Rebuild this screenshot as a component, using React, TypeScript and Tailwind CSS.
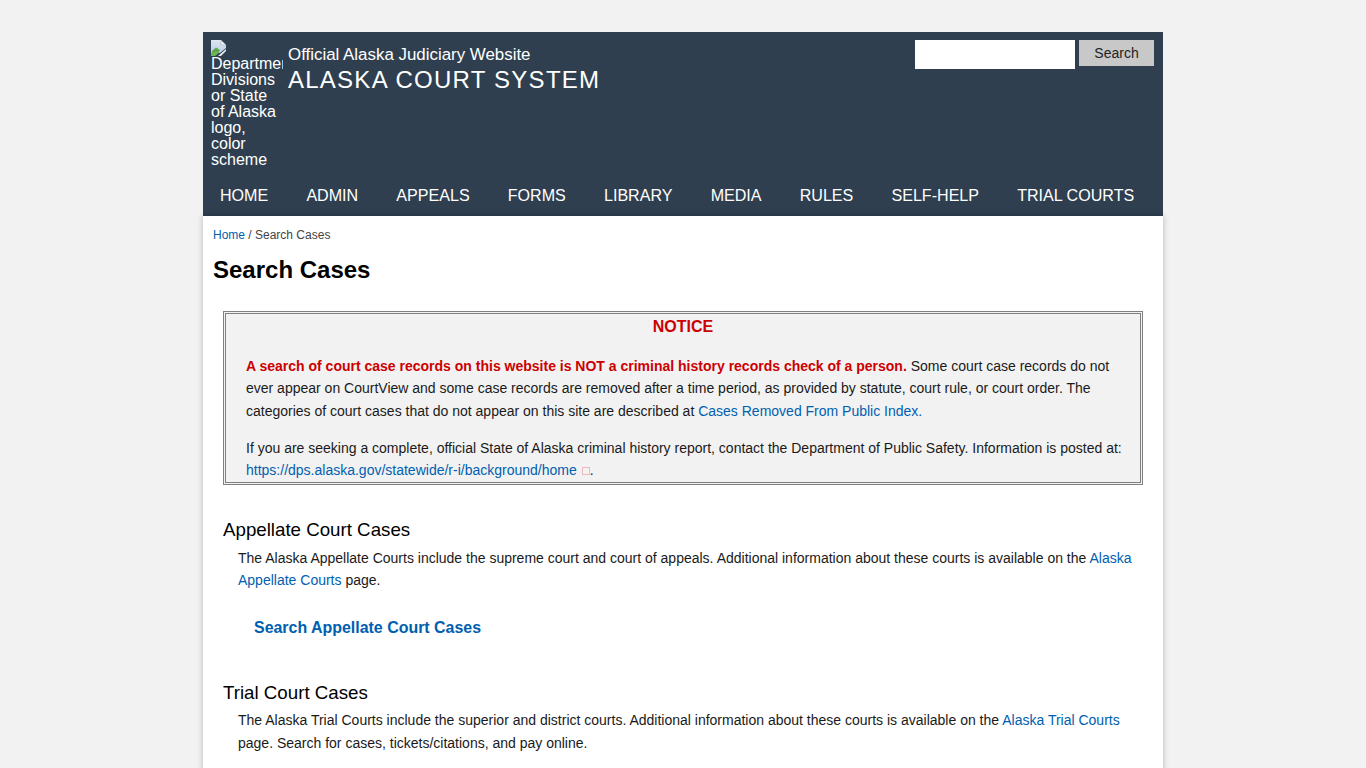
const navItems = ['HOME', 'ADMIN', 'APPEALS', 'FORMS', 'LIBRARY', 'MEDIA', 'RULES', 'SELF-HELP', 'TRIAL COURTS']

const linkClass = 'text-[#0060b0]'

const BrokenImage = () => (
    <svg width="16" height="16" viewBox="0 0 16 16" className="block">
        <defs>
            <linearGradient id="sky" x1="0" y1="0" x2="0" y2="1">
                <stop offset="0" stopColor="#dfe6ee" />
                <stop offset="1" stopColor="#b9cde8" />
            </linearGradient>
        </defs>
        <path d="M0 0H10L15 5V8L9 13H0Z" fill="url(#sky)" />
        <path d="M10 0.5V5H15Z" fill="#f4f5f7" stroke="#9aa3ad" strokeWidth="0.5" />
        <path d="M1 15V11L5 7.5L9 10L5 15Z" fill="#5ea54a" />
        <path d="M0 13V16H4L9 12L7 11Z" fill="#6fb35a" />
        <path d="M7 16L15 9V11L10 16Z" fill="#e8edf2" />
    </svg>
)

const App = () => {
    return (
        <div className="h-screen overflow-hidden bg-[#f2f2f2] pt-8 font-['Liberation_Sans',Arial,sans-serif] text-[14px] leading-[22.4px] text-[#1a1a1a]">
            <div className="mx-auto w-[960px]">
                <header className="bg-[#2f3f50] text-white">
                    <div className="flex h-[143px]">
                        <div className="ml-2 mt-2 w-[72px] overflow-hidden text-[16px] leading-[16px]">
                            <BrokenImage />
                            <div className="w-[65px]">
                                <div className="w-[90px]">Department</div>
                                Divisions or State of Alaska logo, color scheme
                            </div>
                        </div>
                        <div className="ml-[5px] pt-[13px]">
                            <div className="text-[16.9px] leading-[20px]">Official Alaska Judiciary Website</div>
                            <div className="mt-[1px] text-[24px] leading-[28px] tracking-[1.25px]">ALASKA COURT SYSTEM</div>
                        </div>
                        <form className="ml-auto mr-[9px] mt-2 flex gap-1">
                            <input type="text" aria-label="Search" className="h-[29px] w-[160px] bg-white" />
                            <button type="button" className="h-[26px] w-[75px] bg-[#c8c8c8] text-[14px] text-[#222]">
                                Search
                            </button>
                        </form>
                    </div>
                    <nav className="flex h-[41px] items-center gap-[38.15px] pl-[17px] text-[16.08px]">
                        {navItems.map((item) => (
                            <a key={item} href="#">{item}</a>
                        ))}
                    </nav>
                </header>
                <main className="h-[600px] bg-white px-[10px] pt-[9px] shadow-[0_0_6px_rgba(0,0,0,0.25)]">
                    <div className="text-[12px] leading-[20px] text-[#444]">
                        <a href="#" className={linkClass}>Home</a> / Search Cases
                    </div>
                    <h1 className="mt-[9px] text-[24px] leading-[32px] font-bold text-black">Search Cases</h1>
                    <section className="mx-[10px] mt-[25px] h-[174px] border-[3px] border-double border-[#808080] bg-[#f2f2f2] pl-5 pr-[15px]">
                        <div className="pt-[2px] pr-[5px] text-center text-[16px] leading-[22px] font-bold text-[#cc0000]">NOTICE</div>
                        <p className="mt-[17px]">
                            <strong className="text-[#cc0000]">A search of court case records on this website is NOT a criminal history records check of a person.</strong>{' '}
                            Some court case records do not ever appear on CourtView and some case records are removed after a time period, as provided by statute, court rule, or court order. The categories of court cases that do not appear on this site are described at{' '}
                            <a href="#" className={linkClass}>Cases Removed From Public Index.</a>
                        </p>
                        <p className="mt-[14.4px]">
                            If you are seeking a complete, official State of Alaska criminal history report, contact the Department of Public Safety. Information is posted at:{' '}
                            <a href="#" className={linkClass}>https://dps.alaska.gov/statewide/r-i/background/home</a>
                            <span className="ml-[5px] inline-block h-[8px] w-[8px] border border-[#f0b8b8]" />.
                        </p>
                    </section>
                    <section className="mt-[33px] pl-[10px]">
                        <h2 className="text-[18.72px] leading-[24px] text-black">Appellate Court Cases</h2>
                        <p className="mt-[5px] pl-[15px]">
                            The Alaska Appellate Courts include the supreme court and court of appeals. Additional information about these courts is available on the{' '}
                            <a href="#" className={linkClass}>Alaska Appellate Courts</a> page.
                        </p>
                        <a href="#" className="mt-[25px] block pl-[31px] text-[15.95px] leading-[22px] font-bold text-[#0060b0]">Search Appellate Court Cases</a>
                    </section>
                    <section className="mt-[42px] pl-[10px]">
                        <h2 className="text-[18.72px] leading-[24px] text-black">Trial Court Cases</h2>
                        <p className="mt-[4.3px] pl-[15px]">
                            The Alaska Trial Courts include the superior and district courts. Additional information about these courts is available on the{' '}
                            <a href="#" className={linkClass}>Alaska Trial Courts</a> page. Search for cases, tickets/citations, and pay online.
                        </p>
                    </section>
                </main>
            </div>
        </div>
    )
}

export default App
